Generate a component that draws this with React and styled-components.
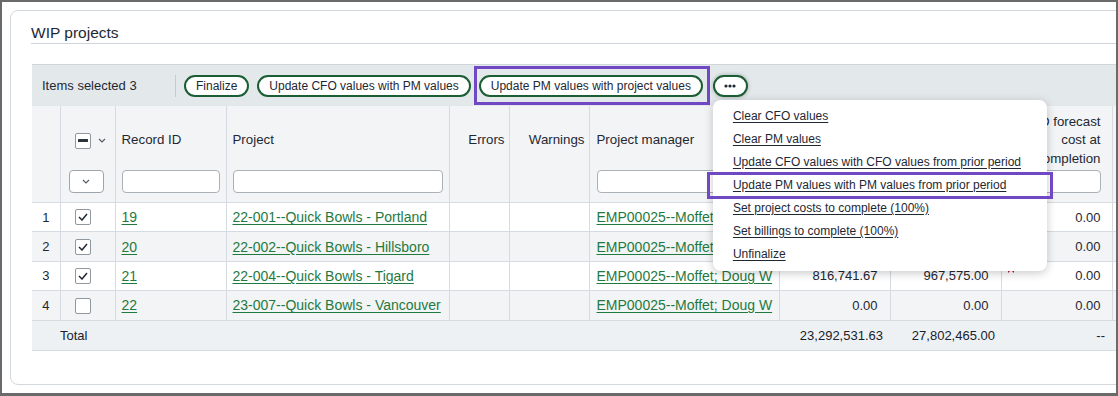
import React from 'react';
import styled, { createGlobalStyle } from 'styled-components';

const Global = createGlobalStyle`
  html, body { margin: 0; padding: 0; background: #fff; }
  body { font-family: "Liberation Sans", Arial, sans-serif; color: #1e2833; }
  * { box-sizing: border-box; }
`;

const GREEN_BORDER = '#1b5e34';
const LINK = '#1f7a3f';
const LINE = '#d5dbe0';
const PURPLE = '#7148c4';

const Frame = styled.div`
  width: 1118px;
  height: 396px;
  border: 2px solid #6a6a6a;
  border-bottom-width: 3px;
  overflow: hidden;
  background: #fff;
  padding: 8px 0 0 8px;
`;

const Card = styled.section`
  width: 1160px;
  height: 375px;
  border: 1px solid #d3d8dc;
  border-radius: 8px;
  padding: 0 0 0 21px;
`;

const Title = styled.h2`
  margin: 0 0 20px -1px;
  padding: 12px 0 0;
  font-size: 15.5px;
  font-weight: 400;
  line-height: 20px;
  color: #1e2833;
  border-bottom: 1px solid #cfd5da;
`;

const Toolbar = styled.div`
  position: relative;
  width: 1120px;
  height: 42px;
  display: flex;
  align-items: center;
  gap: 8px;
  padding-left: 10px;
  background: #e3e8eb;
  border-top: 1px solid #d0d6db;
  z-index: 5;
`;

const Selected = styled.span`
  width: 125px;
  font-size: 13px;
  white-space: nowrap;
`;

const Separator = styled.span`
  width: 1px;
  height: 22px;
  background: #c5ccd1;
`;

const PillButton = styled.button`
  height: 22px;
  padding: 0 10px;
  border: 2px solid ${GREEN_BORDER};
  border-radius: 11px;
  background: #fff;
  color: #1e2833;
  font-family: inherit;
  font-size: 12px;
  line-height: 18px;
  white-space: nowrap;
  cursor: pointer;
`;

const Highlighted = styled.span`
  position: relative;
  display: inline-flex;
  &::after {
    content: '';
    position: absolute;
    left: -5px;
    right: -7px;
    top: -9px;
    bottom: -8px;
    border: 3px solid ${PURPLE};
    pointer-events: none;
  }
`;

const MoreWrap = styled.div`
  position: relative;
  margin-left: 2px;
`;

const MoreButton = styled(PillButton)`
  width: 35px;
  padding: 0;
  display: flex;
  align-items: center;
  justify-content: center;
  box-shadow: 0 0 4px rgba(0, 0, 0, 0.28);
`;

const Menu = styled.div`
  position: absolute;
  left: 0;
  top: calc(100% + 3px);
  width: 334px;
  padding: 5px 0;
  background: #fff;
  border-radius: 8px;
  box-shadow: 0 2px 10px rgba(0, 0, 0, 0.22);
  z-index: 20;
`;

const MenuItem = styled.a`
  position: relative;
  display: block;
  height: 23px;
  line-height: 23px;
  padding-left: 20px;
  font-size: 12px;
  color: #1e2833;
  text-decoration: underline;
  text-underline-offset: 2px;
  white-space: nowrap;
  ${(p) =>
    p.$marked &&
    `
    &::after {
      content: '';
      position: absolute;
      left: -6px;
      right: -6px;
      top: -2px;
      bottom: -2px;
      border: 3px solid ${PURPLE};
    }
  `}
`;

const Table = styled.table`
  width: 1120px;
  table-layout: fixed;
  border-collapse: collapse;
  font-size: 13px;
`;

const Th = styled.th`
  padding: 0;
  background: #f2f4f6;
  border-left: 1px solid ${LINE};
  border-bottom: 1px solid ${LINE};
  vertical-align: top;
  font-weight: 400;
  &:first-child { border-left: none; }
`;

const HeadInner = styled.div`
  height: 96px;
  display: flex;
  flex-direction: column;
  padding: 5px ${(p) => p.$pr}px 9px ${(p) => p.$pl}px;
`;

const Label = styled.div`
  flex: 1;
  display: flex;
  align-items: center;
  justify-content: ${(p) => (p.$align === 'right' ? 'flex-end' : 'flex-start')};
  text-align: ${(p) => p.$align};
  font-size: 13.3px;
  line-height: 18.5px;
  gap: 7px;
`;

const FilterSlot = styled.div`
  height: 23px;
  display: flex;
`;

const FilterInput = styled.input`
  width: 100%;
  height: 23px;
  border: 1px solid #aab2b8;
  border-radius: 4px;
  background: #fff;
`;

const FilterSelect = styled.button`
  width: 35px;
  height: 23px;
  margin-left: -6px;
  border: 1px solid #9da6ad;
  border-radius: 4px;
  background: #fff;
  display: flex;
  align-items: center;
  justify-content: center;
  padding: 0;
`;

const Tr = styled.tr`
  height: 29.4px;
  background: ${(p) => (p.$alt ? '#f2f4f6' : '#fff')};
`;

const Td = styled.td`
  position: relative;
  padding: 0 ${(p) => p.$pr ?? 6}px 0 ${(p) => p.$pl ?? 6}px;
  border-left: 1px solid ${LINE};
  border-bottom: 1px solid ${LINE};
  text-align: ${(p) => p.$align || 'left'};
  white-space: nowrap;
  overflow: hidden;
  vertical-align: middle;
  &:first-child { border-left: none; }
`;

const TotalRow = styled.tr`
  height: 30px;
  background: #eef1f4;
`;

const TotalCell = styled.td`
  padding: 0 ${(p) => p.$pr ?? 6}px 0 ${(p) => p.$pl ?? 6}px;
  border-bottom: 1px solid ${LINE};
  text-align: ${(p) => p.$align || 'left'};
  white-space: nowrap;
  color: #18212b;
`;

const Link = styled.a`
  color: ${LINK};
  font-size: 14px;
  text-decoration: underline;
  text-underline-offset: 2px;
`;

const Box = styled.span`
  width: 16px;
  height: 16px;
  border: 1px solid #8f989f;
  border-radius: 2px;
  background: #fff;
  display: inline-flex;
  align-items: center;
  justify-content: center;
  vertical-align: middle;
`;

const Flag = styled.svg`
  position: absolute;
  left: 6px;
  top: 0;
`;

const Chevron = () => (
  <svg width="8" height="5" viewBox="0 0 8 5">
    <path d="M1 1l3 3 3-3" fill="none" stroke="#555d64" strokeWidth="1.2" />
  </svg>
);

const Check = () => (
  <svg width="10" height="8" viewBox="0 0 10 8">
    <path d="M1 4l3 3 5-6" fill="none" stroke="#1e2833" strokeWidth="1.5" />
  </svg>
);

const Checkbox = ({ checked, indeterminate }) => (
  <Box>
    {checked && <Check />}
    {indeterminate && (
      <svg width="10" height="3" viewBox="0 0 10 3">
        <rect width="10" height="3" rx="0.5" fill="#2b333b" />
      </svg>
    )}
  </Box>
);

const Dots = () => (
  <svg width="12" height="4" viewBox="0 0 12 4">
    <circle cx="2" cy="2" r="1.6" fill="#1e2833" />
    <circle cx="6" cy="2" r="1.6" fill="#1e2833" />
    <circle cx="10" cy="2" r="1.6" fill="#1e2833" />
  </svg>
);

const columns = [
  { key: 'num', width: 28, pl: 0, pr: 0 },
  { key: 'sel', width: 55, pl: 14, pr: 0 },
  { key: 'rid', width: 111, label: 'Record ID', filter: true },
  { key: 'proj', width: 223, label: 'Project', filter: true },
  { key: 'err', width: 60, label: 'Errors', align: 'right', pr: 4 },
  { key: 'warn', width: 80, label: 'Warnings', align: 'right', pr: 4 },
  { key: 'pm', width: 190, label: 'Project manager', filter: true, pl: 7 },
  { key: 'cost', width: 111, label: 'Project cost to date', align: 'right', filter: true, pr: 11 },
  { key: 'bill', width: 111, label: 'Billings to date', align: 'right', filter: true, pr: 11 },
  { key: 'cfo', width: 111, label: 'CFO forecast cost at completion', align: 'right', filter: true, pr: 11 },
  { key: 'extra', width: 40, filter: true },
];

const rows = [
  { n: 1, checked: true, id: '19', project: '22-001--Quick Bowls - Portland', cost: '12,845,230.50', bill: '15,210,400.00', cfo: '0.00' },
  { n: 2, checked: true, id: '20', project: '22-002--Quick Bowls - Hillsboro', cost: '9,630,559.46', bill: '11,624,490.00', cfo: '0.00' },
  { n: 3, checked: true, id: '21', project: '22-004--Quick Bowls - Tigard', cost: '816,741.67', bill: '967,575.00', cfo: '0.00', flag: true },
  { n: 4, checked: false, id: '22', project: '23-007--Quick Bowls - Vancouver', cost: '0.00', bill: '0.00', cfo: '0.00' },
];

const menuItems = [
  'Clear CFO values',
  'Clear PM values',
  'Update CFO values with CFO values from prior period',
  'Update PM values with PM values from prior period',
  'Set project costs to complete (100%)',
  'Set billings to complete (100%)',
  'Unfinalize',
];

function HeaderCell({ col }) {
  const align = col.align || 'left';
  return (
    <Th>
      <HeadInner $pl={col.pl ?? 6} $pr={col.pr ?? 6}>
        <Label $align={align}>
          {col.key === 'sel' ? (
            <>
              <Checkbox indeterminate />
              <Chevron />
            </>
          ) : (
            col.label
          )}
        </Label>
        <FilterSlot>
          {col.key === 'sel' && (
            <FilterSelect aria-label="Select filter">
              <Chevron />
            </FilterSelect>
          )}
          {col.filter && <FilterInput />}
        </FilterSlot>
      </HeadInner>
    </Th>
  );
}

export default function App() {
  return (
    <>
      <Global />
      <Frame>
        <Card>
          <Title>WIP projects</Title>
          <Toolbar>
            <Selected>Items selected 3</Selected>
            <Separator />
            <PillButton>Finalize</PillButton>
            <PillButton>Update CFO values with PM values</PillButton>
            <Highlighted>
              <PillButton>Update PM values with project values</PillButton>
            </Highlighted>
            <MoreWrap>
              <MoreButton aria-label="More actions">
                <Dots />
              </MoreButton>
              <Menu>
                {menuItems.map((m, i) => (
                  <MenuItem key={m} $marked={i === 3}>
                    {m}
                  </MenuItem>
                ))}
              </Menu>
            </MoreWrap>
          </Toolbar>
          <Table>
            <colgroup>
              {columns.map((c) => (
                <col key={c.key} style={{ width: c.width }} />
              ))}
            </colgroup>
            <thead>
              <tr>
                {columns.map((c) => (
                  <HeaderCell key={c.key} col={c} />
                ))}
              </tr>
            </thead>
            <tbody>
              {rows.map((r, i) => (
                <Tr key={r.n} $alt={i % 2 === 1}>
                  <Td $align="center" $pl={0} $pr={0}>{r.n}</Td>
                  <Td $pl={14}>
                    <Checkbox checked={r.checked} />
                  </Td>
                  <Td><Link>{r.id}</Link></Td>
                  <Td><Link>{r.project}</Link></Td>
                  <Td />
                  <Td />
                  <Td $pl={7}><Link>EMP00025--Moffet; Doug W</Link></Td>
                  <Td $align="right" $pr={12}>{r.cost}</Td>
                  <Td $align="right" $pr={12}>{r.bill}</Td>
                  <Td $align="right" $pr={11}>
                    {r.flag && (
                      <Flag width="6" height="11" viewBox="0 0 6 11">
                        <path d="M0 0h6v11L3 8 0 11z" fill="#c8102e" />
                      </Flag>
                    )}
                    {r.cfo}
                  </Td>
                  <Td />
                </Tr>
              ))}
              <TotalRow>
                <TotalCell colSpan={2} $pl={28}>Total</TotalCell>
                <TotalCell colSpan={5} />
                <TotalCell $align="right" $pr={7}>23,292,531.63</TotalCell>
                <TotalCell $align="right" $pr={6}>27,802,465.00</TotalCell>
                <TotalCell $align="right" $pr={7}>--</TotalCell>
                <TotalCell />
              </TotalRow>
            </tbody>
          </Table>
        </Card>
      </Frame>
    </>
  );
}
